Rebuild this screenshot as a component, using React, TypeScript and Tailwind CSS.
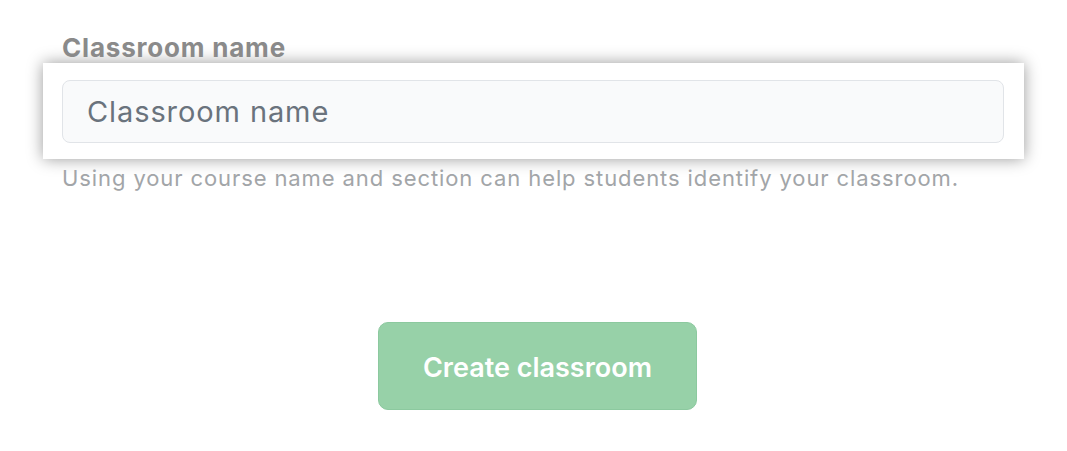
import React from 'react'

export default function App() {
  return (
    <div
      className="min-h-screen w-full bg-white"
      style={{ fontFamily: 'Inter, "Liberation Sans", sans-serif' }}
    >
      <div className="px-[62px] pt-[33px]">
        {/* Label */}
        <label className="block text-[26px] leading-[29px] font-bold tracking-[0.8px] text-[#8a8a8a]">
          Classroom name
        </label>

        {/* Highlighted input box */}
        <div className="-mx-[19px] mt-[1px] bg-white px-[19px] pr-[20px] pt-[17px] pb-[16px] shadow-[0_0_15px_rgba(0,0,0,0.4)]">
          <input
            type="text"
            placeholder="Classroom name"
            className="block h-[63px] w-full rounded-[8px] border border-[#e1e4e8] bg-[#f9fafb] px-[24px] text-[29px] tracking-[0.9px] text-[#24292e] placeholder:text-[#6a737d] outline-none"
          />
        </div>

        {/* Helper text */}
        <p className="mt-[5px] text-[22px] leading-[28px] tracking-[0.9px] text-[#a2a5a8]">
          Using your course name and section can help students identify your classroom.
        </p>

        {/* Submit */}
        <div className="mt-[130px] flex justify-center pl-[8px]">
          <button className="h-[88px] w-[319px] rounded-[10px] border border-[#8cc99f] bg-[#97d1a8] pt-[5px] text-[27px] font-semibold text-white">
            Create classroom
          </button>
        </div>
      </div>
    </div>
  )
}
